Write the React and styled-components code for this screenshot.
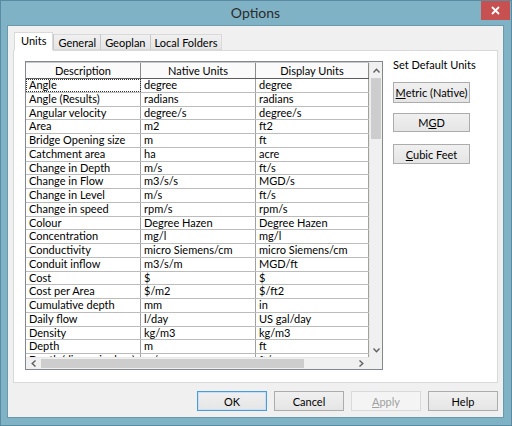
import React from "react";
import styled, { createGlobalStyle } from "styled-components";

const Global = createGlobalStyle`
  html, body { margin: 0; padding: 0; background: #7fb1c6; }
  body { font-family: Lato, "Open Sans", sans-serif; font-size: 11px; color: #000; }
  * { box-sizing: border-box; }
`;

const Frame = styled.div`
  width: 512px;
  height: 426px;
  background: #80b2c6;
  border: 1px solid #5b8ba0;
  display: flex;
  flex-direction: column;
  padding: 0 7px 7px 6px;
  overflow: hidden;
`;

const TitleBar = styled.div`
  height: 24px;
  flex-shrink: 0;
  display: flex;
  align-items: center;
  justify-content: center;
  position: relative;
  font-size: 14px;
  color: #2b2b2b;
  padding-bottom: 2px;
`;

const CloseBox = styled.div`
  position: absolute;
  right: -6px;
  top: -1px;
  width: 29px;
  height: 20px;
  background: #c75050;
  display: flex;
  align-items: center;
  justify-content: center;
`;

const Body = styled.div`
  flex: 1;
  min-height: 0;
  background: #f0f0f0;
  border: 1px solid #6a98ac;
  display: flex;
  flex-direction: column;
  padding: 5px 5px 6px 5px;
`;

const TabRow = styled.div`
  display: flex;
  align-items: flex-end;
  height: 19px;
  flex-shrink: 0;
  padding-left: 1px;
  position: relative;
  z-index: 1;
`;

const Tab = styled.div`
  height: ${(p) => (p.$active ? "19px" : "16px")};
  padding: 0 ${(p) => (p.$active ? "6px" : "4px")};
  border: 1px solid #d9d9d9;
  border-bottom: ${(p) => (p.$active ? "1px solid #fff" : "1px solid #d9d9d9")};
  background: ${(p) => (p.$active ? "#fff" : "linear-gradient(#f0f0f0, #e5e5e5)")};
  margin-left: ${(p) => (p.$active ? "0" : "-1px")};
  margin-bottom: ${(p) => (p.$active ? "-1px" : "0")};
  display: flex;
  align-items: center;
  white-space: nowrap;
  &:first-child { margin-left: 0; }
  ${(p) => (p.$active ? "padding-bottom: 2px;" : "")}
`;

const TabGroup = styled.div`
  display: flex;
  align-items: flex-end;
  & > div { border-left-color: #c8c8c8; }
`;

const Panel = styled.div`
  flex: 1;
  min-height: 0;
  background: #fff;
  border: 1px solid #d9d9d9;
  display: flex;
  padding: 10px 0 12px 11px;
  gap: 10px;
`;

const Grid = styled.div`
  width: 358px;
  border: 1px solid #828790;
  display: grid;
  grid-template-columns: minmax(0, 1fr) 13px;
  grid-template-rows: minmax(0, 1fr) 12px;
  overflow: hidden;
`;

const TableArea = styled.div`
  overflow: hidden;
  min-height: 0;
`;

const Row = styled.div`
  display: grid;
  grid-template-columns: 115px 115px 113px;
  height: ${(p) => (p.$head ? "17px" : "13.75px")};
  background: ${(p) => (p.$head ? "#fafafa" : "#fff")};
  border-bottom: 1px solid ${(p) => (p.$head ? "#5e5e5e" : "#bcbcbc")};
  ${(p) => (p.$head ? "border-top: 1px solid #c8c8c8;" : "")}
`;

const Cell = styled.div`
  padding: 0 3px;
  line-height: ${(p) => (p.$head ? "15px" : "12.75px")};
  white-space: nowrap;
  border-right: 1px solid ${(p) => (p.$head ? "#8a8a8a" : "#a0a0a0")};
  text-align: ${(p) => (p.$head ? "center" : "left")};
  ${(p) => (p.$focus ? "outline: 1px dotted #333; outline-offset: -1px;" : "")}
`;

const VScroll = styled.div`
  background: #f0f0f0;
  border-left: 1px solid #e8e8e8;
  display: flex;
  flex-direction: column;
  min-height: 0;
`;

const HScroll = styled.div`
  background: #f0f0f0;
  display: flex;
  border-top: 1px solid #e8e8e8;
`;

const Corner = styled.div`
  background: #f0f0f0;
`;

const Arrow = styled.div`
  width: ${(p) => p.$w || "13px"};
  height: ${(p) => p.$h || "13px"};
  display: flex;
  align-items: center;
  justify-content: center;
  flex-shrink: 0;
`;

const Thumb = styled.div`
  background: #cdcdcd;
  flex-shrink: 0;
  ${(p) =>
    p.$vertical
      ? "height: 61px; margin: 0 1px;"
      : "width: 263px; margin: 1px 0;"}
`;

const Spacer = styled.div`
  flex: 1;
`;

const Side = styled.div`
  display: flex;
  flex-direction: column;
  align-items: flex-start;
`;

const SideLabel = styled.div`
  margin: -2px 0 11px;
  line-height: 12px;
`;

const Btn = styled.button`
  font: inherit;
  font-size: 11px;
  width: ${(p) => p.$w || "70px"};
  height: ${(p) => p.$h || "20px"};
  flex-shrink: 0;
  background: ${(p) => (p.$disabled ? "#f4f4f4" : "linear-gradient(#f0f0f0, #e5e5e5)")};
  border: 1px solid ${(p) => (p.$default ? "#4c9be0" : p.$disabled ? "#d9d9d9" : "#acacac")};
  color: ${(p) => (p.$disabled ? "#a0a0a0" : "#000")};
  padding: 0;
  margin: ${(p) => p.$m || "0"};
  border-radius: 0;
  ${(p) => (p.$default ? "box-shadow: inset 0 0 0 1px #c6e1f7;" : "")}
`;

const U = styled.span`
  text-decoration: underline;
`;

const Footer = styled.div`
  display: flex;
  flex-shrink: 0;
  justify-content: flex-end;
  gap: 7px;
  padding: 8px 0 0;
`;

const Chevron = ({ dir }) => {
  const rot = { up: 0, down: 180, left: -90, right: 90 }[dir];
  return (
    <svg width="7" height="5" viewBox="0 0 7 5" style={{ transform: `rotate(${rot}deg)` }}>
      <path d="M0.5 4.5 L3.5 1.2 L6.5 4.5" fill="none" stroke="#606060" strokeWidth="1.4" />
    </svg>
  );
};

const CloseIcon = () => (
  <svg width="9" height="9" viewBox="0 0 9 9">
    <path d="M1 1 L8 8 M8 1 L1 8" stroke="#fff" strokeWidth="1.8" />
  </svg>
);

const rows = [
  ["Angle", "degree", "degree"],
  ["Angle (Results)", "radians", "radians"],
  ["Angular velocity", "degree/s", "degree/s"],
  ["Area", "m2", "ft2"],
  ["Bridge Opening size", "m", "ft"],
  ["Catchment area", "ha", "acre"],
  ["Change in Depth", "m/s", "ft/s"],
  ["Change in Flow", "m3/s/s", "MGD/s"],
  ["Change in Level", "m/s", "ft/s"],
  ["Change in speed", "rpm/s", "rpm/s"],
  ["Colour", "Degree Hazen", "Degree Hazen"],
  ["Concentration", "mg/l", "mg/l"],
  ["Conductivity", "micro Siemens/cm", "micro Siemens/cm"],
  ["Conduit inflow", "m3/s/m", "MGD/ft"],
  ["Cost", "$", "$"],
  ["Cost per Area", "$/m2", "$/ft2"],
  ["Cumulative depth", "mm", "in"],
  ["Daily flow", "l/day", "US gal/day"],
  ["Density", "kg/m3", "kg/m3"],
  ["Depth", "m", "ft"],
  ["Depth (dimensionless)", "m/s", "ft/s"],
];

export default function App() {
  return (
    <>
      <Global />
      <Frame>
        <TitleBar>
          Options
          <CloseBox><CloseIcon /></CloseBox>
        </TitleBar>
        <Body>
          <TabRow>
            <Tab $active>Units</Tab>
            <TabGroup>
              <Tab>General</Tab>
              <Tab>Geoplan</Tab>
              <Tab>Local Folders</Tab>
            </TabGroup>
          </TabRow>
          <Panel>
            <Grid>
              <TableArea>
                <Row $head>
                  <Cell $head>Description</Cell>
                  <Cell $head>Native Units</Cell>
                  <Cell $head>Display Units</Cell>
                </Row>
                {rows.map((r, i) => (
                  <Row key={i}>
                    <Cell $focus={i === 0}>{r[0]}</Cell>
                    <Cell>{r[1]}</Cell>
                    <Cell>{r[2]}</Cell>
                  </Row>
                ))}
              </TableArea>
              <VScroll>
                <Arrow $w="12px" $h="16px"><Chevron dir="up" /></Arrow>
                <Thumb $vertical />
                <Spacer />
                <Arrow $w="12px" $h="14px"><Chevron dir="down" /></Arrow>
              </VScroll>
              <HScroll>
                <Arrow $w="15px" $h="11px"><Chevron dir="left" /></Arrow>
                <Thumb />
                <Spacer />
                <Arrow $w="15px" $h="11px"><Chevron dir="right" /></Arrow>
              </HScroll>
              <Corner />
            </Grid>
            <Side>
              <SideLabel>Set Default Units</SideLabel>
              <Btn $w="77px" $h="21px"><U>M</U>etric (Native)</Btn>
              <Btn $w="77px" $h="19px" $m="10px 0 0">M<U>G</U>D</Btn>
              <Btn $w="77px" $h="20px" $m="12px 0 0"><U>C</U>ubic Feet</Btn>
            </Side>
          </Panel>
          <Footer>
            <Btn $default>OK</Btn>
            <Btn>Cancel</Btn>
            <Btn $disabled><U>A</U>pply</Btn>
            <Btn>Help</Btn>
          </Footer>
        </Body>
      </Frame>
    </>
  );
}
